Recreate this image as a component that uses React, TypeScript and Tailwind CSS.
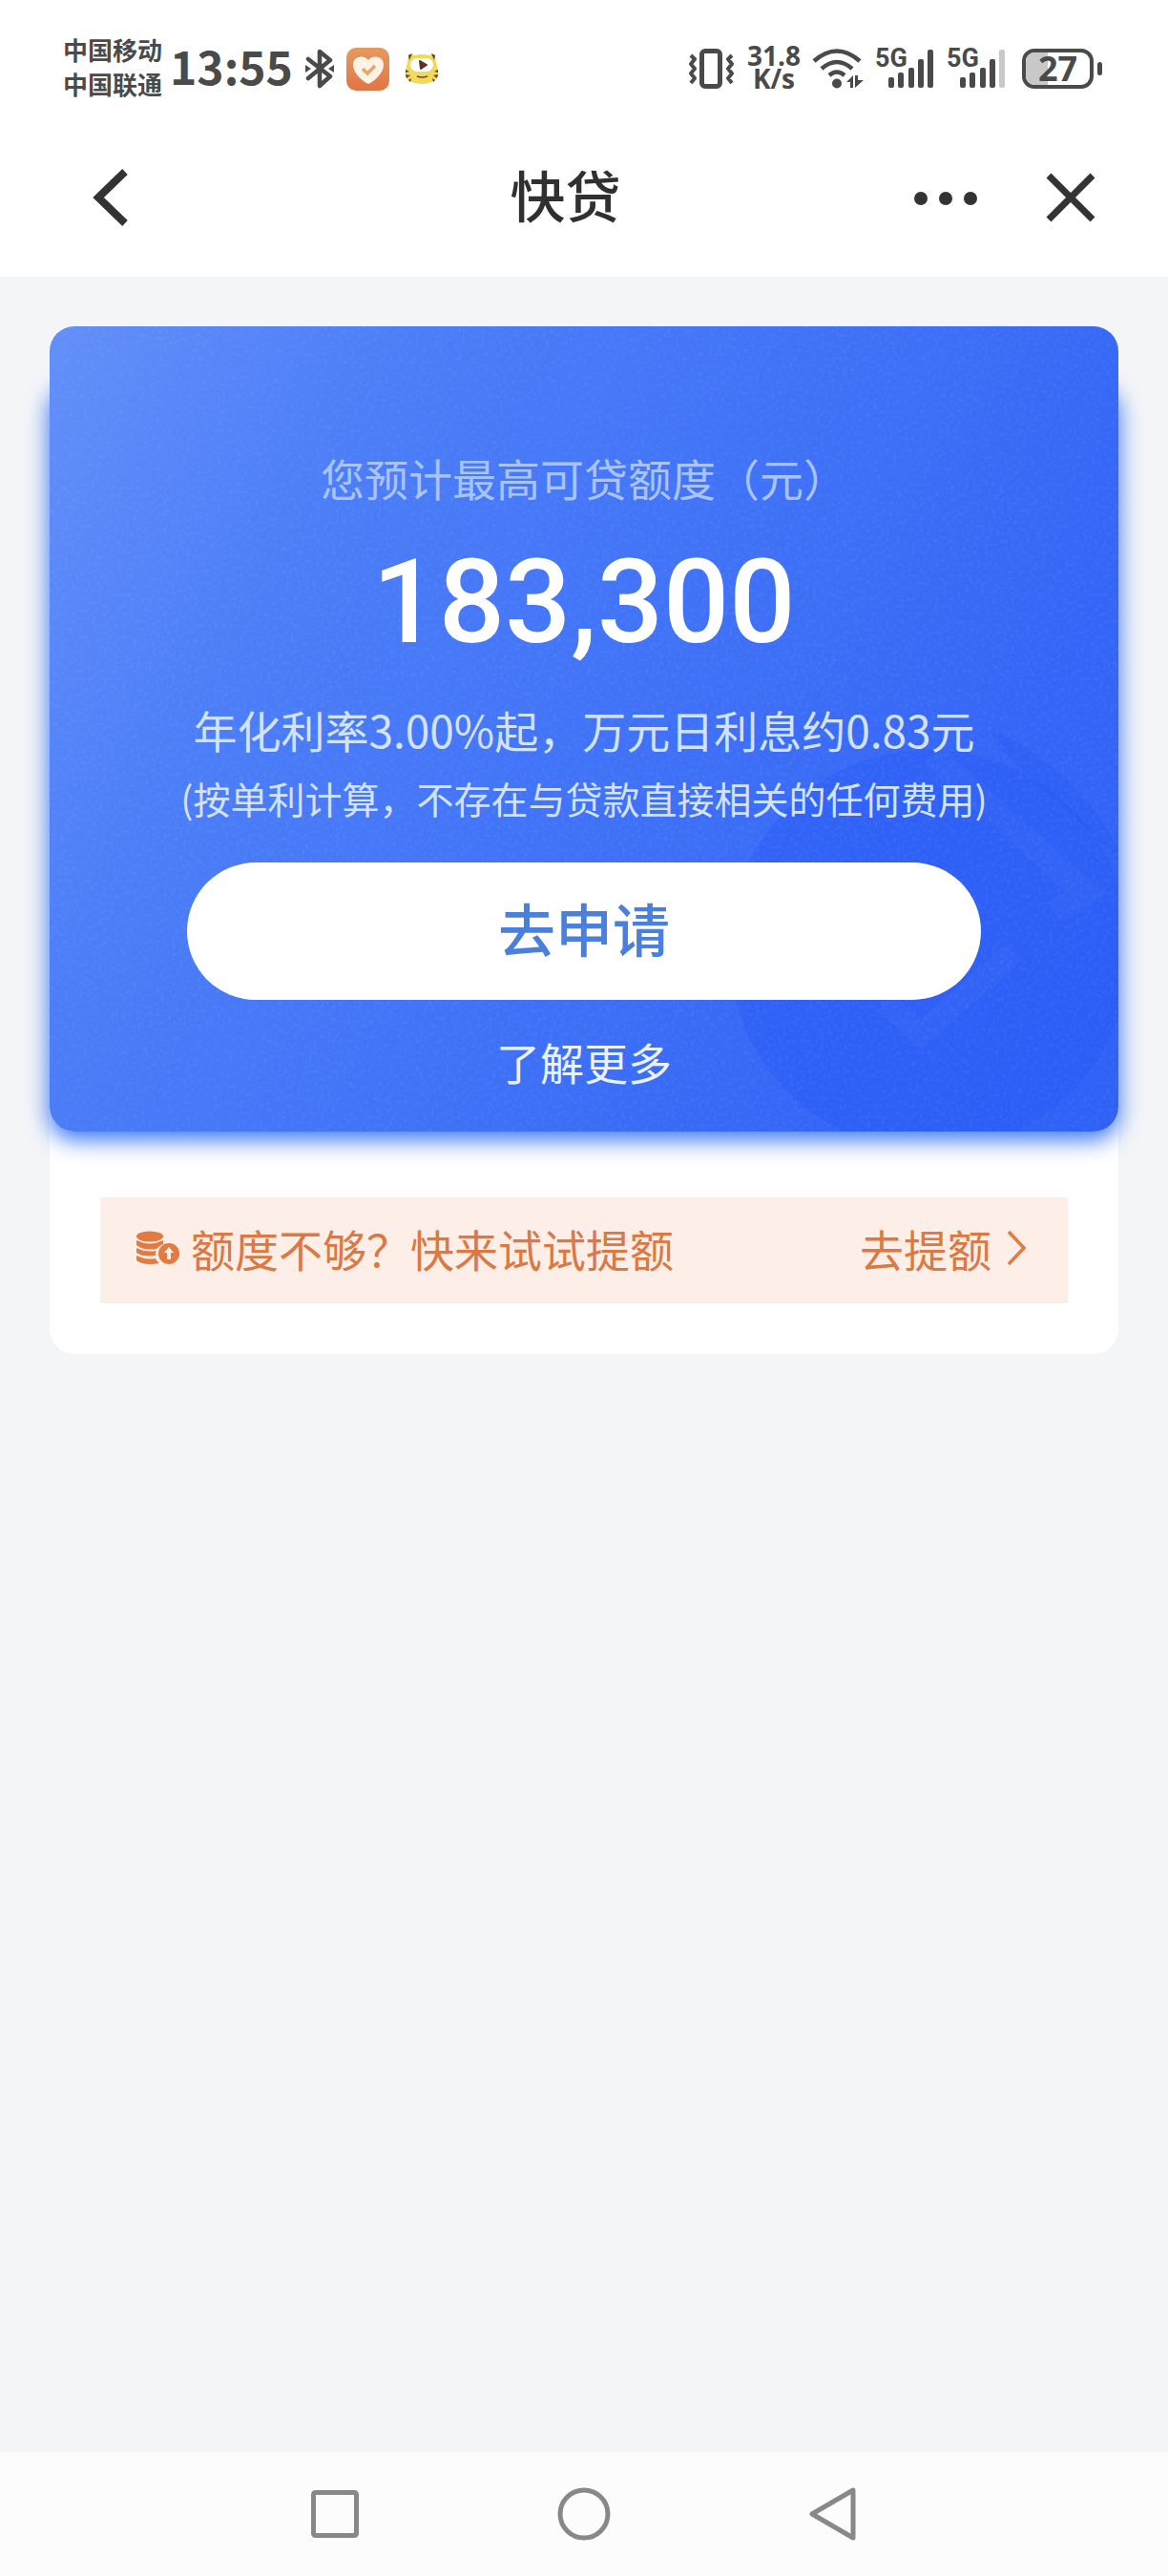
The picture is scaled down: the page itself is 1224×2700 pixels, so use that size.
import React from 'react';

const BluetoothIcon = () => (
  <svg className="w-8 h-[42px]" viewBox="0 0 32 42" fill="none" stroke="#4a4a4a" strokeWidth="4.5" strokeLinejoin="round" strokeLinecap="round">
    <path d="M4 11 L27 29 L16 39 V3 L27 12 L4 31" />
    <path d="M1 17 L7 21 L1 25 Z M31 17 L25 21 L31 25 Z" fill="#4a4a4a" stroke="none" />
  </svg>
);

const HeartAppIcon = () => (
  <svg className="w-[45px] h-[45px]" viewBox="0 0 45 45">
    <defs>
      <linearGradient id="heartBg" x1="0" y1="0" x2="0" y2="1">
        <stop offset="0" stopColor="#e69a60" />
        <stop offset="1" stopColor="#e27545" />
      </linearGradient>
    </defs>
    <rect width="45" height="45" rx="10" fill="url(#heartBg)" />
    <path d="M23 38 C17 35 7 27 7 18 C7 9 18 7 23 13 C28 7 39 9 39 18 C39 27 29 35 23 38 Z" fill="#fdf3e4" />
    <path d="M17 22 L22 27 L30 19" fill="none" stroke="#e6a56e" strokeWidth="3.5" />
  </svg>
);

const TigerAppIcon = () => (
  <svg className="w-9 h-[35px]" viewBox="0 0 36 35">
    <path d="M4 3 Q6 0 10 3 Q18 1 26 3 Q30 0 32 3 L33 11 Q38 24 32 29 Q26 33 18 33 Q10 33 4 29 Q-2 24 3 11 Z" fill="#f3d95a" />
    <path d="M4 3 L8 1 L5 8 Z M32 3 L28 1 L31 8 Z" fill="#5c4032" />
    <path d="M1 18 L5 20 L1 21 Z M1 23 L6 24 L2 27 Z M4 29 L7 27 L6 31 Z M35 18 L31 20 L35 21 Z M35 23 L30 24 L34 27 Z M32 29 L29 27 L30 31 Z" fill="#5c4032" />
    <rect x="6" y="6" width="24" height="14" rx="7" fill="#fff" />
    <path d="M16 9 L23 13 L17 17 Z" fill="#5c3322" stroke="#5c3322" strokeWidth="2" strokeLinejoin="round" />
    <path d="M13 25 Q18 27 24 25" fill="none" stroke="#6b4d25" strokeWidth="1.5" />
  </svg>
);

const VibrateIcon = () => (
  <svg className="w-[50px] h-[42px]" viewBox="0 0 50 42" fill="none" stroke="#4a4a4a">
    <rect x="14.5" y="2.5" width="19" height="37" rx="3.5" strokeWidth="5" />
    <path d="M3 7 L7 11 L3 16 L7 21 L3 26 L7 31 L3 36 M46 7 L42 11 L46 16 L42 21 L46 26 L42 31 L46 36" strokeWidth="4" strokeLinejoin="round" />
  </svg>
);

const WifiIcon = () => (
  <svg className="w-[54px] h-[42px]" viewBox="0 0 54 42" fill="none" stroke="#4a4a4a" strokeWidth="4.5">
    <path d="M2 13 Q26 -8 50 13 M10 21 Q26 7 42 21 M18 28 Q26 21 34 28" />
    <circle cx="26" cy="36.5" r="5" fill="#4a4a4a" stroke="none" />
    <path d="M36 35 L43 28 V41 H40 V35 Z M45 28 H48 V33 H54 L45 41 Z" fill="#4a4a4a" stroke="none" />
  </svg>
);

interface SignalProps {
  weak?: boolean;
}

const Signal: React.FC<SignalProps> = ({ weak }) => (
  <div className="relative w-[63px] h-[42px]">
    <span className="absolute left-0 top-0 font-['Roboto'] text-[27px] leading-5 font-bold">5G</span>
    <svg className="w-full h-full" viewBox="0 0 63 42" fill="#4a4a4a">
      <rect x="14" y="30" width="6" height="11" rx="2" />
      <rect x="24" y="25" width="6" height="16" rx="2" />
      <rect x="35" y="20" width="6" height="21" rx="2" />
      <rect x="45" y="11" width="6" height="30" rx="2" />
      <rect x="55" y="1" width="6" height="40" rx="2" fill={weak ? '#c8c8c8' : '#4a4a4a'} />
    </svg>
  </div>
);

const Battery = () => (
  <div className="flex items-center gap-1">
    <div className="relative flex w-[75px] h-[42px] items-center justify-center rounded-[13px] border-4 border-[#4a4a4a]">
      <div className="absolute inset-y-0 left-0 w-[23px] rounded-l-[9px] bg-[#c8c8c8]" />
      <span className="relative font-['Open_Sans'] text-[36px] leading-9 font-bold">27</span>
    </div>
    <div className="h-[14px] w-[5px] rounded-full bg-[#4a4a4a]" />
  </div>
);

const StatusBar = () => (
  <div className="flex h-[126px] items-start justify-between pt-[35px] pl-[66px] pr-[69px] text-[#4a4a4a]">
    <div className="flex h-[74px] items-center">
      <div className="pb-1 text-[26px] leading-9 font-bold">
        <div>中国移动</div>
        <div>中国联通</div>
      </div>
      <span className="ml-2 mr-3 pb-2 text-[48px] leading-[48px] font-bold">13:55</span>
      <BluetoothIcon />
      <div className="ml-3 mr-4">
        <HeartAppIcon />
      </div>
      <TigerAppIcon />
    </div>
    <div className="flex h-[74px] items-center">
      <VibrateIcon />
      <p className="ml-3 mr-3 pb-1 text-center font-['Open_Sans'] text-[28px] leading-[24px] font-bold">
        31.8
        <br />
        K/s
      </p>
      <WifiIcon />
      <div className="ml-3 mr-4 flex gap-3">
        <Signal />
        <Signal weak />
      </div>
      <Battery />
    </div>
  </div>
);

const Header = () => (
  <header className="grid h-[164px] grid-cols-[1fr_auto_1fr] items-center pl-9 pr-[75px] pb-[2px]">
    <button aria-label="返回" className="ml-[60px] justify-self-start">
      <svg className="w-10 h-16" viewBox="0 0 40 64" fill="none" stroke="#333" strokeWidth="8">
        <path d="M35 5 L7 32 L35 59" />
      </svg>
    </button>
    <h1 className="pb-2 text-center text-[58px] leading-[80px] font-medium text-[#303030]">快贷</h1>
    <div className="flex items-center justify-self-end gap-[70px]">
      <button aria-label="更多">
        <svg className="w-[68px] h-16" viewBox="0 0 68 64" fill="#333">
          <circle cx="8" cy="33" r="7" />
          <circle cx="34" cy="33" r="7" />
          <circle cx="60" cy="33" r="7" />
        </svg>
      </button>
      <button aria-label="关闭">
        <svg className="w-[54px] h-[54px]" viewBox="0 0 54 54" fill="none" stroke="#333" strokeWidth="7">
          <path d="M4 4 L50 50 M50 4 L4 50" />
        </svg>
      </button>
    </div>
  </header>
);

// grain and bank emblem behind the card content
const CardBackdrop = () => (
  <div className="absolute inset-0 overflow-hidden rounded-[26px] bg-[linear-gradient(118deg,#638ff8_0%,#4c7ef8_24%,#3f71f7_55%,#3465f6_80%,#3061f6_100%)]">
    <svg className="absolute right-0 bottom-0 w-[420px] h-[420px]" viewBox="0 0 420 420">
      <circle cx="222" cy="230" r="210" fill="#2455f5" fillOpacity="0.35" />
      <path d="M285 0 Q370 30 420 125 V135 L300 22 Z" fill="#2455f5" fillOpacity="0.25" />
      <path d="M225 25 L385 170 L352 190" fill="none" stroke="#5a87fa" strokeOpacity="0.12" strokeWidth="26" />
      <path d="M175 284 L213 318 L310 232" fill="none" stroke="#5a87fa" strokeOpacity="0.12" strokeWidth="24" />
    </svg>
    <svg className="absolute inset-0 w-full h-full opacity-5">
      <filter id="grain">
        <feTurbulence type="fractalNoise" baseFrequency="0.25" numOctaves="2" />
        <feColorMatrix values="0 0 0 0 1  0 0 0 0 1  0 0 0 0 1  3 0 0 0 -1.4" />
      </filter>
      <rect width="100%" height="100%" filter="url(#grain)" />
    </svg>
  </div>
);

const LoanCard = () => (
  <section className="relative">
    <div className="absolute inset-x-0 top-14 bottom-0 rounded-[26px] shadow-[0_8px_24px_#2f6ff5]" />
    <CardBackdrop />
    <div className="relative flex flex-col items-center pt-[126px] pb-[42px] text-[46px] leading-[64px] text-[#d3e2fe]">
      <p className="text-[#a9c4fd]">您预计最高可贷额度（元）</p>
      <p className="mt-8 font-['Roboto'] text-[122px] leading-[136px] font-medium text-white">183,300</p>
      <p className="mt-8">年化利率3.00%起，万元日利息约0.83元</p>
      <p className="mt-2 text-[39px]">(按单利计算，不存在与贷款直接相关的任何费用)</p>
      <div className="mt-9 w-full px-36">
        <button className="h-36 w-full rounded-full bg-white pb-2 text-[60px] leading-[80px] font-medium text-[#4a7fdc]">
          去申请
        </button>
      </div>
      <a href="#more" className="mt-8 text-[#eaf2ff]">了解更多</a>
    </div>
  </section>
);

const CoinsIcon = () => (
  <svg className="w-12 h-9" viewBox="0 0 48 36" fill="#e27a42">
    <ellipse cx="15" cy="6" rx="14" ry="5.5" />
    <path d="M1 10 Q15 17 29 10 V14 Q24 16 22 19 Q8 21 1 15 Z" />
    <path d="M1 18 Q11 23 22 21 Q20 23 21 26 Q8 28 1 23 Z" />
    <path d="M1 26 Q11 31 21 29 Q22 32 25 34 Q8 37 1 31 Z" />
    <circle cx="35" cy="24" r="11" />
    <path d="M35 17 L40 23 H37 V30 H33 V23 H30 Z" fill="#fdefe8" />
  </svg>
);

const LimitBanner = () => (
  <a
    href="#limit"
    className="flex items-center justify-between bg-[#fdefe8] pt-[22px] pb-[27px] pr-11 pl-[37px] text-[46px] leading-[62px] text-[#db7843]"
  >
    <span className="flex items-center gap-[10px]">
      <CoinsIcon />
      额度不够？快来试试提额
    </span>
    <span className="flex items-center gap-4">
      去提额
      <svg className="w-5 h-9" viewBox="0 0 20 36" fill="none" stroke="#e27a42" strokeWidth="3.5">
        <path d="M2 1 L18 18 L2 35" />
      </svg>
    </span>
  </a>
);

const NavBar = () => (
  <nav className="flex h-[130px] items-center justify-center gap-[205px] bg-[#fcfcfc]">
    <button aria-label="最近任务">
      <svg className="w-14 h-14" viewBox="0 0 56 56" fill="none" stroke="#888" strokeWidth="5">
        <rect x="5.5" y="5.5" width="45" height="45" rx="2" />
      </svg>
    </button>
    <button aria-label="主页">
      <svg className="w-14 h-14" viewBox="0 0 56 56" fill="none" stroke="#888" strokeWidth="5">
        <circle cx="28" cy="28" r="25" />
      </svg>
    </button>
    <button aria-label="后退">
      <svg className="w-14 h-14" viewBox="0 0 56 56" fill="none" stroke="#888" strokeWidth="5" strokeLinejoin="round">
        <path d="M49 3 V53 L6 28 Z" />
      </svg>
    </button>
  </nav>
);

const App: React.FC = () => {
  return (
    <div className="flex min-h-screen flex-col bg-[#f4f5f7] font-['Noto_Sans_CJK_SC',sans-serif]">
      <div className="bg-white">
        <StatusBar />
        <Header />
      </div>
      <main className="grow px-[52px] pt-[52px]">
        <div className="rounded-[26px] bg-white">
          <LoanCard />
          <div className="px-[53px] pt-[69px] pb-[53px]">
            <LimitBanner />
          </div>
        </div>
      </main>
      <NavBar />
    </div>
  );
};

export default App;
